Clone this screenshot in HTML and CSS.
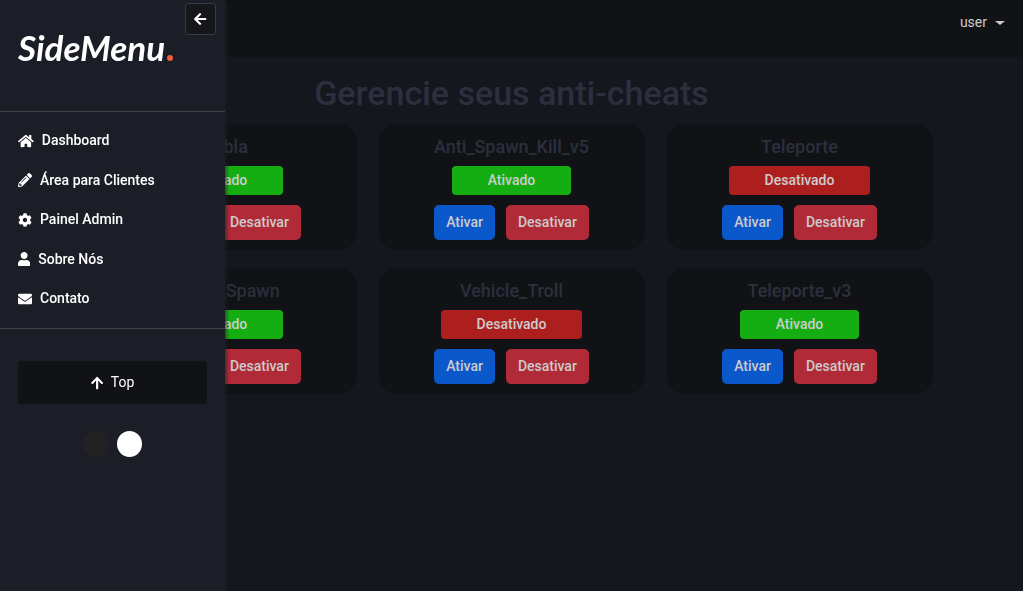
FILE: index.html
```html
<!DOCTYPE html>
<html lang="pt-BR">
<head>
<meta charset="utf-8">
<meta name="viewport" content="width=device-width, initial-scale=1">
<title>Gerencie seus anti-cheats</title>
<link rel="stylesheet" href="styles.css">
</head>
<body>
<header class="topbar">
  <button class="user-menu" type="button">user<span class="caret"></span></button>
</header>

<main class="content">
  <h1 class="page-title">Gerencie seus anti-cheats</h1>
  <div class="cards">
    <section class="card">
      <h2 class="card-title">blabla</h2>
      <p class="status status-on">Ativado</p>
      <div class="actions"><button class="btn btn-primary" type="button">Ativar</button><button class="btn btn-danger" type="button">Desativar</button></div>
    </section>
    <section class="card">
      <h2 class="card-title">Anti_Spawn_Kill_v5</h2>
      <p class="status status-on">Ativado</p>
      <div class="actions"><button class="btn btn-primary" type="button">Ativar</button><button class="btn btn-danger" type="button">Desativar</button></div>
    </section>
    <section class="card">
      <h2 class="card-title">Teleporte</h2>
      <p class="status status-off">Desativado</p>
      <div class="actions"><button class="btn btn-primary" type="button">Ativar</button><button class="btn btn-danger" type="button">Desativar</button></div>
    </section>
    <section class="card">
      <h2 class="card-title">Player_Spawn</h2>
      <p class="status status-on">Ativado</p>
      <div class="actions"><button class="btn btn-primary" type="button">Ativar</button><button class="btn btn-danger" type="button">Desativar</button></div>
    </section>
    <section class="card">
      <h2 class="card-title">Vehicle_Troll</h2>
      <p class="status status-off">Desativado</p>
      <div class="actions"><button class="btn btn-primary" type="button">Ativar</button><button class="btn btn-danger" type="button">Desativar</button></div>
    </section>
    <section class="card">
      <h2 class="card-title">Teleporte_v3</h2>
      <p class="status status-on">Ativado</p>
      <div class="actions"><button class="btn btn-primary" type="button">Ativar</button><button class="btn btn-danger" type="button">Desativar</button></div>
    </section>
  </div>
</main>

<aside class="sidebar">
  <button class="dismiss" type="button" aria-label="Fechar menu">
    <svg class="icon" viewBox="0 0 448 512"><path d="M257.5 445.1l-22.2 22.2c-9.4 9.4-24.6 9.4-33.9 0L7 273c-9.4-9.4-9.4-24.6 0-33.9L201.4 44.7c9.4-9.4 24.6-9.4 33.9 0l22.2 22.2c9.5 9.5 9.3 25-.4 34.3L136.6 216H424c13.3 0 24 10.7 24 24v32c0 13.3-10.7 24-24 24H136.6l120.5 114.8c9.8 9.3 10 24.8.4 34.3z"/></svg>
  </button>
  <div class="logo"><a class="logo-link" href="#">SideMenu<span class="logo-dot"></span></a></div>
  <nav class="menu">
    <ul class="menu-list">
      <li><a class="menu-link" href="#"><svg class="icon" viewBox="0 0 576 512"><path d="M280.37 148.26L96 300.11V464a16 16 0 0 0 16 16l112.06-.29a16 16 0 0 0 15.92-16V368a16 16 0 0 1 16-16h64a16 16 0 0 1 16 16v95.64a16 16 0 0 0 16 16.05L464 480a16 16 0 0 0 16-16V300L295.67 148.26a12.19 12.19 0 0 0-15.3 0zM571.6 251.47L488 182.56V44.05a12 12 0 0 0-12-12h-56a12 12 0 0 0-12 12v72.61L318.47 43a48 48 0 0 0-61 0L4.34 251.47a12 12 0 0 0-1.6 16.9l25.5 31A12 12 0 0 0 45.15 301l235.22-193.74a12.19 12.19 0 0 1 15.3 0L530.9 301a12 12 0 0 0 16.9-1.6l25.5-31a12 12 0 0 0-1.7-16.93z"/></svg>Dashboard</a></li>
      <li><a class="menu-link" href="#"><svg class="icon" viewBox="0 0 512 512"><path d="M497.9 142.1l-46.1 46.1c-4.7 4.7-12.3 4.7-17 0l-111-111c-4.7-4.7-4.7-12.3 0-17l46.1-46.1c18.7-18.7 49.1-18.7 67.9 0l60.1 60.1c18.8 18.7 18.8 49.1 0 67.9zM284.2 99.8L21.6 362.4.4 483.9c-2.9 16.4 11.4 30.6 27.8 27.8l121.5-21.3 262.6-262.6c4.7-4.7 4.7-12.3 0-17l-111-111c-4.8-4.7-12.4-4.7-17.1 0zM124.1 339.9c-5.5-5.5-5.5-14.3 0-19.8l154-154c5.5-5.5 14.3-5.5 19.8 0s5.5 14.3 0 19.8l-154 154c-5.5 5.5-14.3 5.5-19.8 0zM88 424h48v36.3l-64.5 11.3-31.1-31.1L51.7 376H88v48z"/></svg>Área para Clientes</a></li>
      <li><a class="menu-link" href="#"><svg class="icon" viewBox="0 0 512 512"><path d="M487.4 315.7l-42.6-24.6c4.3-23.2 4.3-47 0-70.2l42.6-24.6c4.9-2.8 7.1-8.6 5.5-14-11.1-35.6-30-67.8-54.7-94.6-3.8-4.1-10-5.1-14.8-2.3L380.8 110c-17.9-15.4-38.5-27.3-60.8-35.1V25.8c0-5.6-3.9-10.5-9.4-11.7-36.7-8.2-74.3-7.8-109.2 0-5.5 1.2-9.4 6.1-9.4 11.7V75c-22.2 7.9-42.8 19.8-60.8 35.1L88.7 85.5c-4.9-2.8-11-1.9-14.8 2.3-24.7 26.7-43.6 58.9-54.7 94.6-1.7 5.4.6 11.2 5.5 14L67.3 221c-4.3 23.2-4.3 47 0 70.2l-42.6 24.6c-4.9 2.8-7.1 8.6-5.5 14 11.1 35.6 30 67.8 54.7 94.6 3.8 4.1 10 5.1 14.8 2.3l42.6-24.6c17.9 15.4 38.5 27.3 60.8 35.1v49.2c0 5.6 3.9 10.5 9.4 11.7 36.7 8.2 74.3 7.8 109.2 0 5.5-1.2 9.4-6.1 9.4-11.7v-49.2c22.2-7.9 42.8-19.8 60.8-35.1l42.6 24.6c4.9 2.8 11 1.9 14.8-2.3 24.7-26.7 43.6-58.9 54.7-94.6 1.5-5.5-.7-11.3-5.6-14.1zM256 336c-44.1 0-80-35.9-80-80s35.9-80 80-80 80 35.9 80 80-35.9 80-80 80z"/></svg>Painel Admin</a></li>
      <li><a class="menu-link" href="#"><svg class="icon" viewBox="0 0 448 512"><path d="M224 256c70.7 0 128-57.3 128-128S294.7 0 224 0 96 57.3 96 128s57.3 128 128 128zm89.6 32h-16.7c-22.2 10.2-46.9 16-72.9 16s-50.6-5.8-72.9-16h-16.7C60.2 288 0 348.2 0 422.4V464c0 26.5 21.5 48 48 48h352c26.5 0 48-21.5 48-48v-41.6c0-74.2-60.2-134.4-134.4-134.4z"/></svg>Sobre Nós</a></li>
      <li><a class="menu-link" href="#"><svg class="icon" viewBox="0 0 512 512"><path d="M502.3 190.8c3.9-3.1 9.7-.2 9.7 4.7V400c0 26.5-21.5 48-48 48H48c-26.5 0-48-21.5-48-48V195.6c0-5 5.7-7.8 9.7-4.7 22.4 17.4 52.1 39.5 154.1 113.6 21.1 15.4 56.7 47.8 92.2 47.6 35.7.3 72-32.8 92.3-47.6 102-74.1 131.6-96.3 154-113.7zM256 320c23.2.4 56.6-29.2 73.4-41.4 132.7-96.3 142.8-104.7 173.4-128.7 5.8-4.5 9.2-11.5 9.2-18.9v-19c0-26.5-21.5-48-48-48H48c-26.5 0-48 21.5-48 48v19c0 7.4 3.4 14.3 9.2 18.9 30.6 23.9 40.7 32.4 173.4 128.7 16.8 12.2 50.2 41.8 73.4 41.4z"/></svg>Contato</a></li>
    </ul>
  </nav>
  <div class="sidebar-tools">
    <a class="to-top" href="#"><svg class="icon" viewBox="0 0 448 512"><path d="M34.9 289.5l-22.2-22.2c-9.4-9.4-9.4-24.6 0-33.9L207 39c9.4-9.4 24.6-9.4 33.9 0l194.3 194.3c9.4 9.4 9.4 24.6 0 33.9L413 289.4c-9.5 9.5-25 9.3-34.3-.4L264 168.6V456c0 13.3-10.7 24-24 24h-32c-13.3 0-24-10.7-24-24V168.6L69.2 289.1c-9.3 9.8-24.8 10-34.3.4z"/></svg>Top</a>
    <div class="themes">
      <button class="theme theme-dark" type="button" aria-label="Tema escuro"></button>
      <button class="theme theme-light" type="button" aria-label="Tema claro"></button>
    </div>
  </div>
</aside>
</body>
</html>
```
FILE: styles.css
```css
* { box-sizing: border-box; }

body {
  margin: 0;
  min-height: 100vh;
  background: #14171e;
  color: #ccc;
  font: 400 14px/21px Roboto, "Liberation Sans", sans-serif;
}

button { font: inherit; color: inherit; cursor: pointer; }
h1, h2, p, ul { margin: 0; padding: 0; }
a { color: inherit; text-decoration: none; }

.icon { height: 14px; width: auto; fill: currentColor; display: block; }

.topbar {
  display: flex;
  justify-content: flex-end;
  padding: 12px 18px 24px;
  background: #111215;
}
.user-menu {
  display: flex;
  align-items: center;
  gap: 8px;
  padding: 0;
  border: 0;
  background: none;
}
.caret {
  border: 5px solid transparent;
  border-top: 4px solid currentColor;
  border-bottom: 0;
}

.content { padding: 14px 16px 32px; }
.page-title {
  margin-bottom: 9px;
  color: #2c2f3e;
  font-size: 34px;
  font-weight: 500;
  line-height: 44px;
  text-align: center;
}
.cards {
  display: grid;
  grid-template-columns: repeat(3, 1fr);
  gap: 18px 22px;
  max-width: 842px;
  margin: 0 auto;
}
.card {
  display: flex;
  flex-direction: column;
  align-items: center;
  padding: 11px 10px 10px;
  border-radius: 18px;
  background: #111215;
}
.card-title {
  margin-bottom: 7px;
  color: #2c2f3e;
  font-size: 18px;
  font-weight: 500;
  line-height: 24px;
}
.status {
  margin-bottom: 10px;
  padding: 4px 36px;
  border-radius: 4px;
  font-weight: 500;
}
.status-on { background: #15ae12; }
.status-off { background: #ad1f1f; }
.actions { display: flex; gap: 11px; }
.btn {
  padding: 7px 12px;
  border: 0;
  border-radius: 5px;
  font-weight: 500;
}
.btn-primary { background: #0b58ca; }
.btn-danger { background: #b02a37; }

.sidebar {
  position: fixed;
  top: 0;
  bottom: 0;
  left: 0;
  width: 225px;
  background: #1b1e26;
  box-shadow: 2px 2px 3px rgba(34, 34, 34, .6);
  color: #fff;
}
.dismiss {
  position: absolute;
  top: 3px;
  right: 9px;
  display: grid;
  place-items: center;
  width: 31px;
  height: 32px;
  padding: 0;
  border: 1px solid #383b47;
  border-radius: 3px;
  background: #16171a;
}
.logo {
  padding: 27px 18px 44px;
  border-bottom: 1px solid #444;
}
.logo-link {
  display: flex;
  align-items: baseline;
  gap: 2px;
  font: italic 700 35px/40px Lato, "Liberation Sans", cursive;
}
.logo-dot {
  width: 6px;
  height: 6px;
  border-radius: 50%;
  background: #f35b3f;
}
.menu {
  padding: 18px 18px 19px;
  border-bottom: 1px solid #444;
}
.menu-list {
  display: flex;
  flex-direction: column;
  justify-content: space-between;
  min-height: 179px;
  list-style: none;
}
.menu-link {
  display: flex;
  align-items: center;
  gap: 8px;
  font-weight: 500;
}
.sidebar-tools { padding: 32px 18px; }
.to-top {
  display: flex;
  align-items: center;
  justify-content: center;
  gap: 8px;
  padding: 11px;
  border-radius: 3px;
  background: #111215;
}
.themes {
  display: flex;
  justify-content: center;
  gap: 9px;
  margin-top: 27px;
}
.theme {
  width: 25px;
  height: 26px;
  padding: 0;
  border: 0;
  border-radius: 50%;
}
.theme-dark { background: #222; }
.theme-light { background: #fff; }
```
